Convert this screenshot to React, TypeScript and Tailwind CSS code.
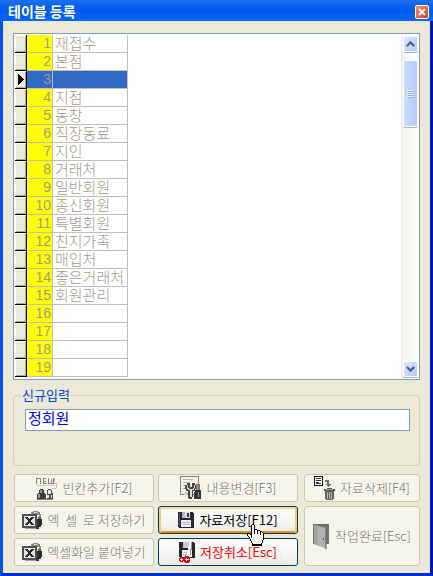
import { useState } from 'react'
import type { ReactNode } from 'react'
import clsx from 'clsx'

const ROW_COUNT = 19

const names = [
  '재접수', '본점', '', '지점', '동창', '직장동료', '지인', '거래처', '일반회원', '종신회원',
  '특별회원', '친지가족', '매입처', '좋은거래처', '회원관리',
]

const handRows = [
  '.....XX..........',
  '....XooX.........',
  '....XooX.........',
  '....XooX.........',
  '....XooX.........',
  '....XooXXX.......',
  '....XooXooXXX....',
  '....XooXooXooXX..',
  '....XooXooXooXoX.',
  'XXX.XooXooXooXooX',
  'XooXXooooooooXooX',
  'XoooXoooooooooooX',
  '.XooXoooooooooooX',
  '..XoXoooooooooooX',
  '..XoooooooooooooX',
  '...XooooooooooooX',
  '...XoooooooooooX.',
  '....XooooooooooX.',
  '....XooooooooooX.',
  '.....XooooooooX..',
  '.....XXXXXXXXXX..',
  '.....XXXXXXXXXX..',
]

function HandCursor() {
  return (
    <svg
      width="17"
      height="22"
      shapeRendering="crispEdges"
      aria-hidden="true"
      className="absolute left-[88px] top-[17px] z-10 pointer-events-none"
    >
      {handRows.map((row, y) =>
        row.split('').map((c, x) =>
          c === '.' ? null : <rect key={`${x}-${y}`} x={x} y={y} width="1" height="1" fill={c === 'X' ? '#000' : '#fff'} />
        )
      )}
    </svg>
  )
}

function NewIcon() {
  return (
    <svg width="22" height="23" shapeRendering="crispEdges" aria-hidden="true">
      {/* "new" banner strokes */}
      <path d="M.5 7V1.500H4.500V7M7.500 1.500H10M7.500 4.500H10M7 6.500H10.500M7.500 1V7M12.500 1V6.500H17.500V1M15.500 2V6" fill="none" stroke="#85857f" />
      <path d="M0 8.500H18" stroke="#d0d0c8" />
      <path d="M18.500 1V5M18 6.500H21M20.500 6V11M16 11.500H20" fill="none" stroke="#bdbdb4" />
      <path d="M4 12h3v1h1v3h1v1h1v5H1v-5h1v-1h1v-3h1z" fill="#3a3a3a" />
      <path d="M12 12h3v1h1v3h1v6h-6v-5h0v-4h1z" fill="#4a4a46" />
      <path d="M4 13h2v3H4zM2 17h2v4H2z" fill="#9a9a92" />
      <path d="M12 13h3v4h-3zM11 18h2v3h-2zM15 18h1v3h-1z" fill="#e6e6de" />
      <path d="M1 22.500H17" stroke="#85857f" />
    </svg>
  )
}

function ExcelIcon() {
  return (
    <svg width="20" height="20" shapeRendering="crispEdges" aria-hidden="true">
      <path d="M9 4V2h2V1h5v1h2v2h1v3h-2V5h-2V4h-2v2h-2V4z" fill="#8c8c86" />
      <path d="M12 2h3v1h-3z" fill="#d2d2ca" />
      <path d="M15 9h5v6h-1v2h-2v2h-3V9z" fill="#2e2e2e" />
      <path d="M16 7h3v2h-3z" fill="#5e5e5a" />
      <path d="M0 4h15v14H0z" fill="#50504e" />
      <path d="M2 6h11v10H2z" fill="#e4e4de" />
      <path d="M3 7h3v1h1v1h1V8h1V7h3v1h-1v1h-1v1h-1v2h1v1h1v1h1v1H9v-1H8v-1H7v1H6v1H3v-1h1v-1h1v-1h1v-2H5V9H4V8H3z" fill="#2a2a2a" />
      <path d="M3 18.500H14" stroke="#a0a09a" />
    </svg>
  )
}

function EditIcon() {
  return (
    <svg width="22" height="24" shapeRendering="crispEdges" aria-hidden="true">
      <path d="M.5 .5H18.500V18.500H.5z" fill="#f4f3ea" stroke="#85857e" />
      <path d="M3 3.500H13M3 6.500H10M3 9.500H7M3 12.500H7" stroke="#b4b4ac" />
      <path d="M5 16h5v3H4v-1h1z" fill="#c8c8c0" />
      <path d="M7 7h3v4h2V7h3v2h1v4h-1v2h-2v6h-1v2H9v-1H8v-7H6v-2H5V9h2z" fill="#444" />
      <path d="M7 9h1v3h1v1h4v-1h1V9h1v3h-1v2h-2v7h-2v-7H8v-1H7z" fill="#dcdcd4" />
      <path d="M16 8h4v6h-4z" fill="#787872" />
      <path d="M15 14h6v9h-7v-7h1z" fill="#333" />
      <path d="M17.500 9V14M18.500 16V21" stroke="#9a9a94" />
    </svg>
  )
}

function DeleteIcon() {
  return (
    <svg width="21" height="24" shapeRendering="crispEdges" aria-hidden="true">
      <path d="M.5 .5H8.500V9.500H.5z" fill="#fff" stroke="#111" />
      <path d="M2 2.500H7M2 4.500H7M2 6.500H5M2 7.500H7" stroke="#333" />
      <path d="M11 4h4v4h2v1h-1v1h-1v1h-1v-1h-1V9h-1V8h1V6h-2z" fill="#74746e" />
      <path d="M13 12h5v1h3v2H10v-2h3z" fill="#55554f" />
      <path d="M11 15h9v8h-1v1h-7v-1h-1z" fill="#686862" />
      <path d="M13.500 16V23M15.500 16V23M17.500 16V23" stroke="#b4b4ac" />
      <path d="M12 13.500H19" stroke="#a0a098" />
    </svg>
  )
}

function DiskIcon() {
  return (
    <svg width="16" height="16" shapeRendering="crispEdges" aria-hidden="true">
      <path d="M0 0h15v1h1v15H1v-1H0z" fill="#26262c" />
      <path d="M1 1h1v13H1z" fill="#5a5a66" />
      <path d="M4 0h8v6H4z" fill="#dfe3ee" />
      <path d="M4 0h3v6H4z" fill="#b4b8c8" />
      <path d="M9 1h2v4H9z" fill="#3a3a44" />
      <path d="M3 8h10v7H3z" fill="#eef2fc" />
      <path d="M4 10.500H12M4 12.500H12" stroke="#a9b6d8" />
    </svg>
  )
}

function CutDiskIcon() {
  return (
    <svg width="16" height="22" shapeRendering="crispEdges" aria-hidden="true">
      <path d="M0 1h15v1h1v15H1v-1H0z" fill="#26262c" />
      <path d="M4 1h7v6H4z" fill="#c6cad8" />
      <path d="M3 9h10v7H3z" fill="#eef2fc" />
      <path d="M4 11.500H12M4 13.500H12" stroke="#a9b6d8" />
      {/* scissors */}
      <path d="M11 0h2v9h-1v5H8V9h1V5h1V2h1z" fill="#fff" />
      <path d="M12 1h1v8h-1v5h-1V8h1z" fill="#8e929e" />
      <path d="M6 14h1v1h3v1h1v5h-1v1H6v-1H5v-5h1z" fill="#e60012" />
      <path d="M1 16h3v1h1v3H4v1H1v-1H0v-3h1z" fill="#e60012" />
      <path d="M1 18h3v1H1zM2 17h1v3H2zM6 18h4v1H6zM7 17h1v3H7z" fill="#fff" />
    </svg>
  )
}

function DoorIcon() {
  return (
    <svg width="17" height="25" aria-hidden="true">
      <path d="M0 0H16V20H12L0 20z" fill="#74746f" />
      <path d="M1 1L13 4V25L1 20z" fill="#b2b2ae" />
      <path d="M1 1L5 2V21L1 20z" fill="#a2a29e" />
      <path d="M13 4V25" stroke="#5e5e5a" />
      <path d="M10 14h1v2h-1z" fill="#4a4a46" />
    </svg>
  )
}

interface ActionButtonProps {
  icon: ReactNode
  label: string
  variant?: 'disabled' | 'hot' | 'danger'
  className?: string
  children?: ReactNode
}

function ActionButton({ icon, label, variant = 'disabled', className, children }: ActionButtonProps) {
  return (
    <button
      type="button"
      disabled={variant === 'disabled'}
      className={clsx(
        'relative flex items-center justify-center gap-[5px] min-h-7 rounded-[3px] border text-[13px] leading-4 whitespace-pre',
        variant === 'disabled' && 'border-[#c9c7ba] bg-[#f5f4ea] font-light text-[#77756c] [text-shadow:1px_1px_0_#fff]',
        variant === 'hot' &&
          'border-[#003c74] bg-linear-to-b from-white to-[#ecebe5] text-black shadow-[inset_0_2px_0_#fdd889,inset_2px_0_0_#fbc761,inset_-2px_0_0_#fbc761,inset_0_-2px_0_#e59700]',
        variant === 'danger' && 'border-[#003c74] bg-linear-to-b from-white to-[#ecebe5] text-[#ff0000]',
        className
      )}
    >
      {icon}
      <span>{label}</span>
      {children}
    </button>
  )
}

function ScrollButton({ dir }: { dir: 'up' | 'down' }) {
  return (
    <button
      type="button"
      aria-label={dir}
      className="h-4 w-[15px] flex items-center justify-center rounded-[2px] border border-white bg-linear-to-br from-[#dbe5fe] to-[#b4c8f8] shadow-[0_1px_0_#9db5ea]"
    >
      <svg width="9" height="6" aria-hidden="true" className={dir === 'down' ? 'rotate-180' : ''}>
        <path d="M.8 5L4.500 1.400L8.200 5" fill="none" stroke="#4d6185" strokeWidth="2.200" />
      </svg>
    </button>
  )
}

function ScrollBar() {
  return (
    <div className="flex flex-col items-center w-[17px] pt-px pb-px border-l border-[#eeede5] bg-linear-to-r from-[#f3f1ec] to-[#fefefb]">
      <ScrollButton dir="up" />
      <div className="mt-2 h-[67px] w-[15px] flex flex-col items-center justify-center gap-px rounded-[2px] border border-white bg-linear-to-r from-[#cbdafd] to-[#b7cafa] shadow-[0_1px_0_#9db5ea]">
        {[0, 1, 2, 3].map((i) => (
          <div key={i} className="w-[7px] h-px bg-[#eef4fe] shadow-[1px_1px_0_#8cb0f8]" />
        ))}
      </div>
      <div className="flex-1" />
      <ScrollButton dir="down" />
    </div>
  )
}

export default function App() {
  const [selected, setSelected] = useState(3)
  const [value, setValue] = useState('정회원')

  return (
    <div className="bg-[#ece9d8] font-['Noto_Sans_CJK_KR',sans-serif] select-none">
      {/* Title bar */}
      <header className="flex items-center justify-between h-[21px] pl-2 pr-1 bg-linear-to-b from-[#1c6ff0] via-[#0058ee] to-[#0668ff]">
        <h1 className="text-[14px] leading-5 font-bold text-white">테이블 등록</h1>
        <button
          type="button"
          aria-label="닫기"
          className="mt-[3px] size-[14px] flex items-center justify-center rounded-[2px] border border-white bg-linear-to-br from-[#f0906e] to-[#d63a10]"
        >
          <svg width="8" height="8" aria-hidden="true">
            <path d="M1 1L7 7M7 1L1 7" stroke="#fff" strokeWidth="2" />
          </svg>
        </button>
      </header>

      <main className="border-x-3 border-b-3 border-l-[#0a4ee8] border-r-[#0018b0] border-b-[#0030d0] px-[10px] pt-3 pb-[7px]">
        <div className="flex justify-between border border-[#7f9db9] bg-white p-px">
          <table className="w-[113px] mb-px table-fixed border-separate border-spacing-0 font-light text-[#a09c8c]">
            <colgroup>
              <col className="w-3" />
              <col className="w-[26px]" />
              <col className="w-[75px]" />
            </colgroup>
            <tbody>
              {Array.from({ length: ROW_COUNT }, (_, i) => i + 1).map((no) => {
                const active = no === selected
                return (
                  <tr key={no} onClick={() => setSelected(no)} className={active ? 'bg-[#316ac5]' : ''}>
                    <td className="h-[18px] p-0 border-r border-b border-black bg-[#ece9d8] shadow-[inset_1px_1px_0_#fff,inset_-1px_-1px_0_#aca899]">
                      {active && (
                        <svg width="7" height="11" className="ml-[3px]" shapeRendering="crispEdges" aria-hidden="true">
                          <path d="M0 0L6 5.500L0 11z" fill="#000" />
                        </svg>
                      )}
                    </td>
                    <td
                      className={clsx(
                        "h-[18px] p-0 pr-px border-r border-b border-[#c0c0c0] text-right font-['Liberation_Sans',sans-serif] text-[14px] leading-[17px]",
                        !active && 'bg-[#ffff00]'
                      )}
                    >
                      {no}
                    </td>
                    <td className="h-[18px] p-0 pb-[2px] pl-[2px] border-r border-b border-[#c0c0c0] text-[15px] leading-[15px] whitespace-nowrap">
                      {names[no - 1]}
                    </td>
                  </tr>
                )
              })}
            </tbody>
          </table>
          <ScrollBar />
        </div>

        <fieldset className="mt-[7px] pl-[11px] pr-[9px] pt-[6px] pb-[34px] rounded-[4px] border border-[#d0d0bf]">
          <legend className="-ml-1 px-px text-[13px] leading-4 text-[#0046d5]">
            <label htmlFor="new-entry">신규입력</label>
          </legend>
          <input
            id="new-entry"
            type="text"
            value={value}
            onChange={(e) => setValue(e.target.value)}
            className="block w-full h-[22px] pl-[2px] pb-[5px] border border-[#7f9db9] bg-white text-[15px] leading-[17px] text-[#0000ff] outline-none"
          />
        </fieldset>

        <div className="mt-2 pl-px grid grid-cols-[140fr_140fr_118fr] gap-1">
          <ActionButton icon={<NewIcon />} label="빈칸추가[F2]" />
          <ActionButton icon={<EditIcon />} label="내용변경[F3]" />
          <ActionButton icon={<DeleteIcon />} label="자료삭제[F4]" className="ml-[2px]" />
          <ActionButton icon={<ExcelIcon />} label="엑  셀  로 저장하기" />
          <ActionButton icon={<DiskIcon />} label="자료저장[F12]" variant="hot">
            <HandCursor />
          </ActionButton>
          <ActionButton icon={<DoorIcon />} label="작업완료[Esc]" className="row-span-2 ml-[2px]" />
          <ActionButton icon={<ExcelIcon />} label="엑셀화일 붙여넣기" />
          <ActionButton icon={<CutDiskIcon />} label="저장취소[Esc]" variant="danger" />
        </div>
      </main>
    </div>
  )
}
